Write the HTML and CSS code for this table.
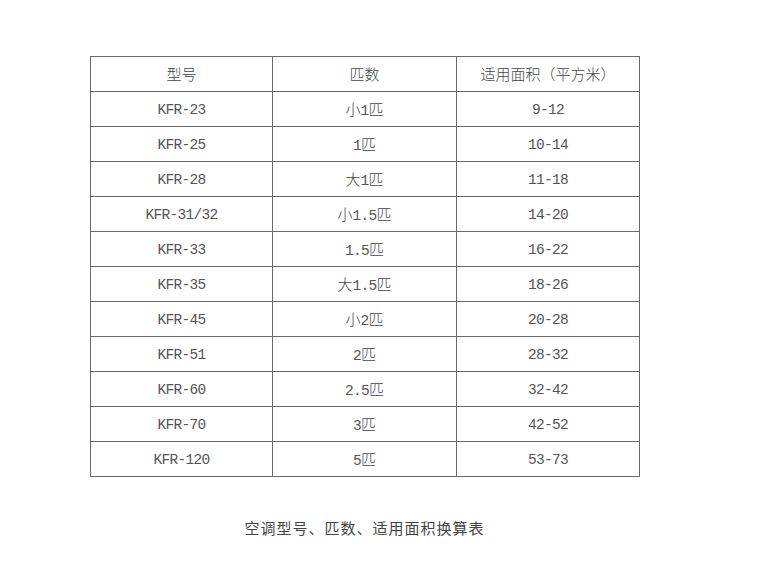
FILE: index.html
```html
<!DOCTYPE html>
<html lang="zh">
<head>
<meta charset="utf-8">
<link rel="stylesheet" href="styles.css">
</head>
<body>
<div class="wrap">
  <table class="spec">
    <colgroup><col class="c1"><col class="c2"><col class="c3"></colgroup>
    <thead>
      <tr><th><span class="cjk">型号</span></th><th><span class="cjk">匹数</span></th><th><span class="cjk">适用面积（平方米）</span></th></tr>
    </thead>
    <tbody>
      <tr><td>KFR-23</td><td><span class="cjk">小</span>1<span class="cjk">匹</span></td><td>9-12</td></tr>
      <tr><td>KFR-25</td><td>1<span class="cjk">匹</span></td><td>10-14</td></tr>
      <tr><td>KFR-28</td><td><span class="cjk">大</span>1<span class="cjk">匹</span></td><td>11-18</td></tr>
      <tr><td>KFR-31/32</td><td><span class="cjk">小</span>1.5<span class="cjk">匹</span></td><td>14-20</td></tr>
      <tr><td>KFR-33</td><td>1.5<span class="cjk">匹</span></td><td>16-22</td></tr>
      <tr><td>KFR-35</td><td><span class="cjk">大</span>1.5<span class="cjk">匹</span></td><td>18-26</td></tr>
      <tr><td>KFR-45</td><td><span class="cjk">小</span>2<span class="cjk">匹</span></td><td>20-28</td></tr>
      <tr><td>KFR-51</td><td>2<span class="cjk">匹</span></td><td>28-32</td></tr>
      <tr><td>KFR-60</td><td>2.5<span class="cjk">匹</span></td><td>32-42</td></tr>
      <tr><td>KFR-70</td><td>3<span class="cjk">匹</span></td><td>42-52</td></tr>
      <tr><td>KFR-120</td><td>5<span class="cjk">匹</span></td><td>53-73</td></tr>
    </tbody>
  </table>
  <p class="caption">空调型号、匹数、适用面积换算表</p>
</div>
</body>
</html>
```

FILE: styles.css
```css
html, body {
  margin: 0;
  padding: 0;
  background: #ffffff;
}
.wrap {
  width: 549px;
  margin-left: 90px;
  padding-top: 56px;
}
.spec {
  width: 549px;
  border-collapse: collapse;
  table-layout: fixed;
  color: #555;
  font-family: "Liberation Mono", "Noto Sans CJK SC", monospace;
  font-size: 14.5px;
  letter-spacing: -0.7px;
}
.c1 { width: 182px; }
.c2 { width: 184px; }
.c3 { width: 183px; }
.spec th, .spec td {
  border: 1px solid #6a6a6a;
  height: 32px;
  padding: 2px 0 0;
  text-align: center;
  vertical-align: middle;
  font-weight: normal;
  line-height: 16px;
}
.cjk {
  font-family: "Noto Sans CJK SC", sans-serif;
  font-size: 15px;
  font-weight: 300;
  letter-spacing: 0;
  color: #444;
}
.caption {
  margin: 41px 0 0;
  text-align: center;
  font-family: "Noto Sans CJK SC", sans-serif;
  font-size: 15px;
  color: #444;
  line-height: 20px;
  letter-spacing: 1px;
}
```
